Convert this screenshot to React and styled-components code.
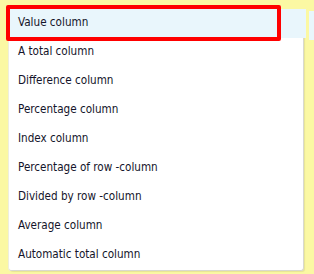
import React from 'react';
import styled, { createGlobalStyle } from 'styled-components';

const GlobalStyle = createGlobalStyle`
  html, body {
    margin: 0;
    padding: 0;
    background: #fbf8a3;
  }
`;

const Page = styled.div`
  width: 314px;
  height: 274px;
  display: flex;
  align-items: flex-start;
  padding: 9px 0 0 9px;
  box-sizing: border-box;
  overflow: hidden;
  font-family: 'DejaVu Sans Condensed', 'Liberation Sans', sans-serif;
`;

const Menu = styled.ul`
  list-style: none;
  margin: 0;
  padding: 0;
  width: 294px;
  height: 261px;
  background: #fff;
  border-right: 1px solid #d9d9cf;
  border-bottom: 1px solid #d9d9cf;
  border-radius: 0 0 3px 3px;
  box-shadow: 1px 1px 1px rgba(0, 0, 0, 0.08), -1px 0 0 #eeeedc;
`;

const Item = styled.li`
  position: relative;
  height: 29px;
  line-height: 26px;
  margin: 0 ${(p) => (p.$active ? '-3px' : '0')} 0 ${(p) => (p.$active ? '-1px' : '0')};
  padding-left: ${(p) => (p.$active ? '10px' : '9px')};
  background: ${(p) => (p.$active ? '#e9f6fc' : 'transparent')};
  color: #14142a;
  font-size: 11.6px;
  white-space: nowrap;
  cursor: default;
`;

const Highlight = styled.span`
  position: absolute;
  left: -2px;
  top: -4px;
  width: 275px;
  height: 36px;
  border: 4px solid #ff0000;
  border-radius: 2px;
  box-sizing: border-box;
  pointer-events: none;
`;

const Sliver = styled.div`
  flex: 1;
  margin: 2px 0 0 5px;
  height: 29px;
  background: #e9f6fc;
`;

const items = [
  'Value column',
  'A total column',
  'Difference column',
  'Percentage column',
  'Index column',
  'Percentage of row -column',
  'Divided by row -column',
  'Average column',
  'Automatic total column',
];

export default function App() {
  return (
    <>
      <GlobalStyle />
      <Page>
        <Menu>
          {items.map((label, i) => (
            <Item key={label} $active={i === 0}>
              {label}
              {i === 0 && <Highlight />}
            </Item>
          ))}
        </Menu>
        <Sliver />
      </Page>
    </>
  );
}
